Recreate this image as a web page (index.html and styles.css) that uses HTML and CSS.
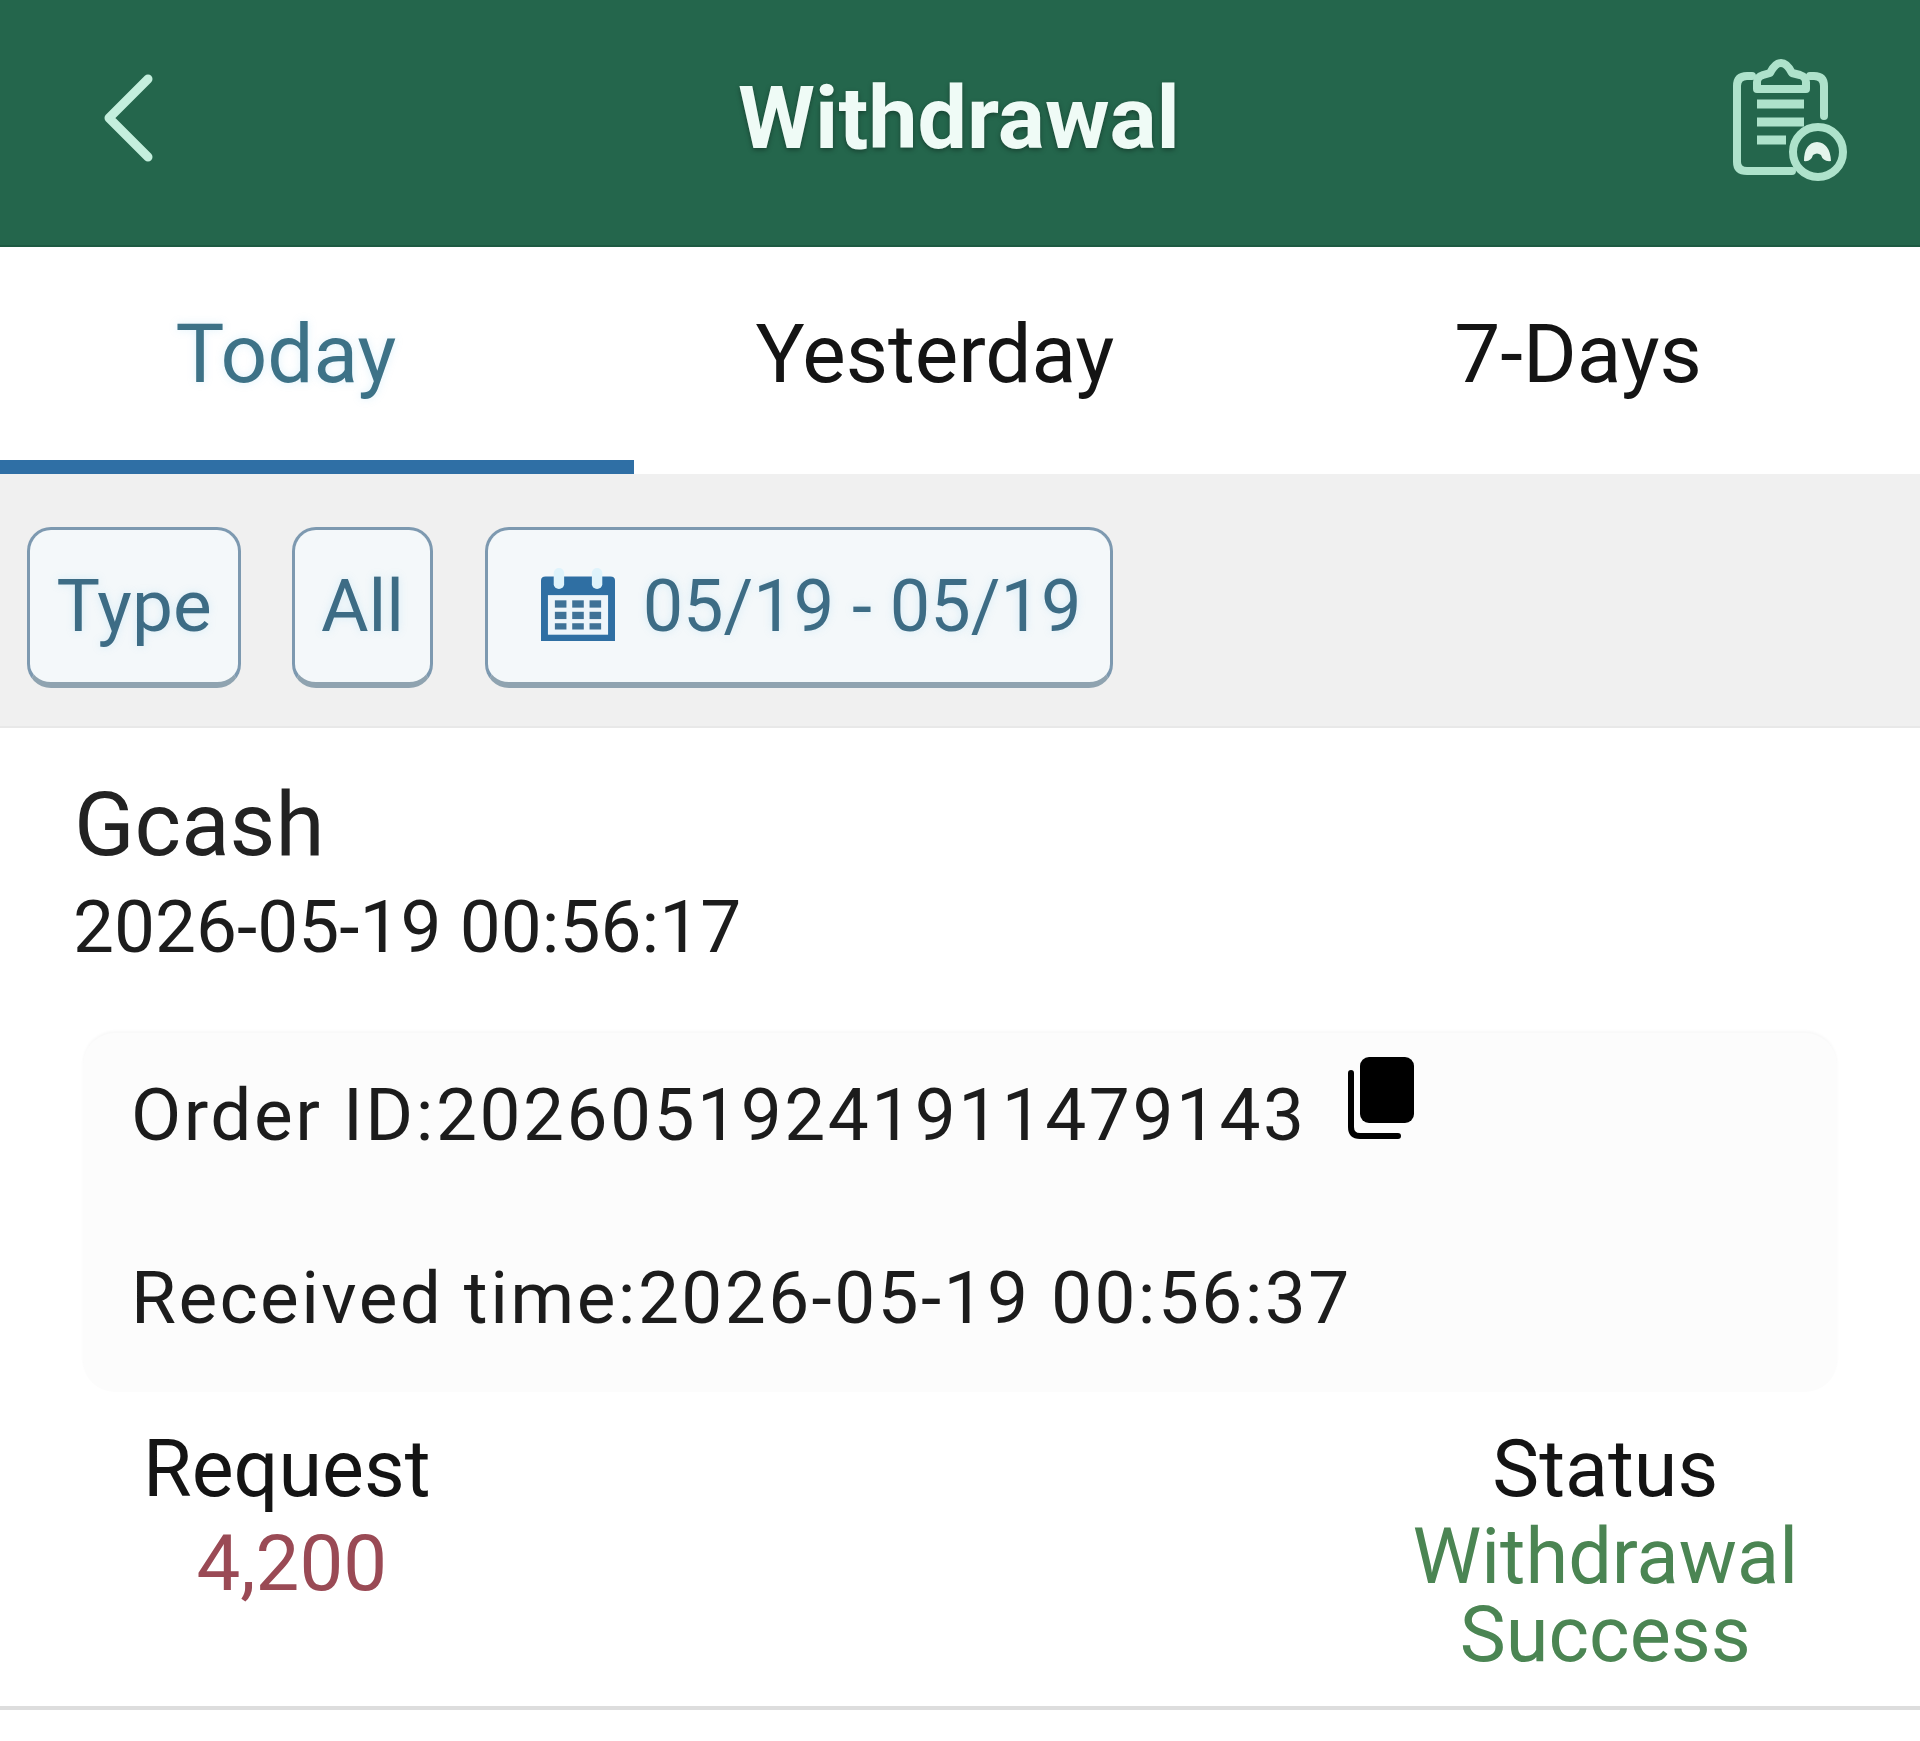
FILE: index.html
```html
<!DOCTYPE html>
<html lang="en">
<head>
    <meta charset="UTF-8">
    <meta name="viewport" content="width=device-width, initial-scale=1.0">
    <title>Withdrawal</title>
    <link rel="stylesheet" href="styles.css">
</head>
<body>
    <header class="app-bar">
        <svg class="back-icon" viewBox="0 0 56 92" fill="none" stroke="#c4efdd" stroke-width="9" stroke-linecap="round" stroke-linejoin="round">
            <path d="M48 7 L9 46 L48 85"/>
        </svg>
        <h1>Withdrawal</h1>
        <svg class="record-icon" viewBox="0 0 116 124" fill="none" stroke="#aee2cb" stroke-width="8" stroke-linecap="round" stroke-linejoin="round">
            <path d="M20 18 H15 Q5 18 5 28 V104 Q5 113 15 113 H60"/>
            <path d="M78 18 H82 Q92 18 92 28 V58"/>
            <path d="M25 31 V24 Q25 19 31 17 L38 15 Q43 5 49 5 Q55 5 60 15 L68 17 Q74 19 74 24 V31 Z"/>
            <path d="M25 46 H72 M25 64 H72 M25 82 H54" stroke-width="9" stroke-linecap="butt"/>
            <circle cx="86" cy="94" r="25"/>
            <path d="M72 103 Q72 85 85 84 Q98 85 99 103 Q91 104 89 97 Q85 94 81 97 Q79 104 72 103 Z" fill="#e4f5ec" stroke="none"/>
        </svg>
    </header>

    <nav class="tabs">
        <div class="tab active">Today</div>
        <div class="tab">Yesterday</div>
        <div class="tab">7-Days</div>
    </nav>

    <div class="filters">
        <button class="chip chip-type">Type</button>
        <button class="chip chip-all">All</button>
        <button class="chip chip-date">
            <svg class="calendar-icon" viewBox="4 1 64 72" preserveAspectRatio="none">
                <path d="M4 14 Q4 10 8 10 H64 Q68 10 68 14 V72 H4 Z" fill="#2f6fa3"/>
                <rect x="10" y="28" width="52" height="38" fill="#eef5fa"/>
                <rect x="15" y="2" width="9" height="20" rx="4.5" fill="#dff3fb"/>
                <rect x="48" y="2" width="9" height="20" rx="4.5" fill="#dff3fb"/>
                <g fill="#3f7297">
                    <rect x="16" y="33" width="10" height="7"/><rect x="31" y="33" width="10" height="7"/><rect x="46" y="33" width="10" height="7"/>
                    <rect x="16" y="44" width="10" height="7"/><rect x="31" y="44" width="10" height="7"/><rect x="46" y="44" width="10" height="7"/>
                    <rect x="16" y="55" width="10" height="6"/><rect x="31" y="55" width="10" height="6"/><rect x="46" y="55" width="10" height="6"/>
                </g>
            </svg>
            <span>05/19 - 05/19</span>
        </button>
    </div>

    <section class="record">
        <div class="record-name">Gcash</div>
        <div class="record-date">2026-05-19 00:56:17</div>

        <div class="detail-card">
            <div class="order-row">
                <span>Order ID:20260519241911479143</span>
                <svg class="copy-icon" viewBox="0 0 66 84">
                    <rect x="12" y="2" width="54" height="66" rx="9" fill="#000"/>
                    <path d="M3 18 V72 Q3 81 12 81 H50" fill="none" stroke="#000" stroke-width="6" stroke-linecap="round"/>
                </svg>
            </div>
            <div class="received-row">Received time:2026-05-19 00:56:37</div>
        </div>

        <div class="summary">
            <div class="summary-col request">
                <div class="summary-label">Request</div>
                <div class="amount">4,200</div>
            </div>
            <div class="summary-col status">
                <div class="summary-label">Status</div>
                <div class="status-text">Withdrawal<br>Success</div>
            </div>
        </div>
    </section>
</body>
</html>
```

FILE: styles.css
```css
body {
    font-family: 'Roboto', 'Liberation Sans', sans-serif;
    margin: 0;
    padding: 0;
    background: #fff;
    color: #111;
}

.app-bar {
    height: 247px;
    background: #24664c;
    display: flex;
    align-items: center;
    justify-content: space-between;
    padding: 0 72px 10px 100px;
    box-sizing: border-box;
    border-bottom: 2px solid #1d5a42;
}

.app-bar h1 {
    margin: 0 0 0 30px;
    font-size: 88px;
    font-weight: 700;
    color: #effbf6;
    text-shadow: 0 2px 5px rgba(0, 0, 0, 0.35);
}

.back-icon {
    width: 56px;
    height: 92px;
}

.record-icon {
    width: 116px;
    height: 124px;
    margin-top: 5px;
}

.tabs {
    display: grid;
    grid-template-columns: 634px 664px 622px;
    height: 227px;
}

.tab {
    box-sizing: border-box;
    padding: 62px 62px 0 0;
    text-align: center;
    font-size: 82px;
    line-height: 90px;
    color: #141414;
}

.tab.active {
    color: #3d7287;
    border-bottom: 14px solid #2f6fa5;
    text-shadow: 0 0 8px rgba(130, 205, 240, 0.25);
}

.filters {
    height: 254px;
    box-sizing: border-box;
    background: #f0f0f0;
    display: flex;
    align-items: flex-start;
    padding: 53px 0 0 27px;
    border-bottom: 2px solid #e8e8e8;
}

.chip {
    height: 161px;
    box-sizing: border-box;
    font-family: inherit;
    font-size: 73px;
    color: #3d6c85;
    background: #f4f8fa;
    border: 3px solid #7d99b0;
    border-bottom: 6px solid #8fa3b0;
    border-radius: 24px;
    padding: 0;
    display: flex;
    align-items: center;
    justify-content: center;
    text-shadow: 0 0 8px rgba(130, 205, 240, 0.25);
}

.chip-type {
    width: 214px;
}

.chip-all {
    width: 141px;
    margin-left: 51px;
}

.chip-date {
    width: 628px;
    margin-left: 52px;
    padding-left: 24px;
    gap: 28px;
    font-size: 72px;
}

.calendar-icon {
    width: 74px;
    height: 75px;
    margin-bottom: 4px;
}

.record {
    padding: 47px 83px 0 74px;
    height: 982px;
    box-sizing: border-box;
    border-bottom: 4px solid #ddd;
}

.record-name {
    font-size: 89px;
    line-height: 100px;
    color: #222;
}

.record-date {
    font-size: 73px;
    line-height: 86px;
    margin-top: 9px;
    margin-left: -1px;
    color: #1c1c1c;
}

.detail-card {
    margin: 63px 0 0 9px;
    height: 359px;
    box-sizing: border-box;
    background: #fcfcfc;
    border-radius: 32px;
    box-shadow: 0 -2px 3px rgba(0, 0, 0, 0.03);
    padding: 40px 0 0 48px;
    font-size: 73px;
    letter-spacing: 2.5px;
    line-height: 84px;
    color: #1c1c1c;
}

.order-row {
    display: flex;
    align-items: flex-start;
    gap: 42px;
}

.copy-icon {
    width: 66px;
    height: 84px;
    margin-top: -18px;
}

.received-row {
    margin-top: 99px;
    letter-spacing: 2.4px;
}

.summary {
    display: flex;
    justify-content: space-between;
    margin-top: 35px;
}

.summary-col {
    text-align: center;
    font-size: 78px;
}

.request {
    margin-left: 69px;
}

.status {
    margin-right: 39px;
}

.summary-label {
    font-size: 79px;
    line-height: 84px;
    color: #141414;
}

.amount {
    line-height: 84px;
    margin-top: 11px;
    margin-left: 10px;
    color: #9a4a55;
}

.status-text {
    font-size: 77.5px;
    line-height: 78px;
    margin-top: 7px;
    color: #4b8553;
}
```
